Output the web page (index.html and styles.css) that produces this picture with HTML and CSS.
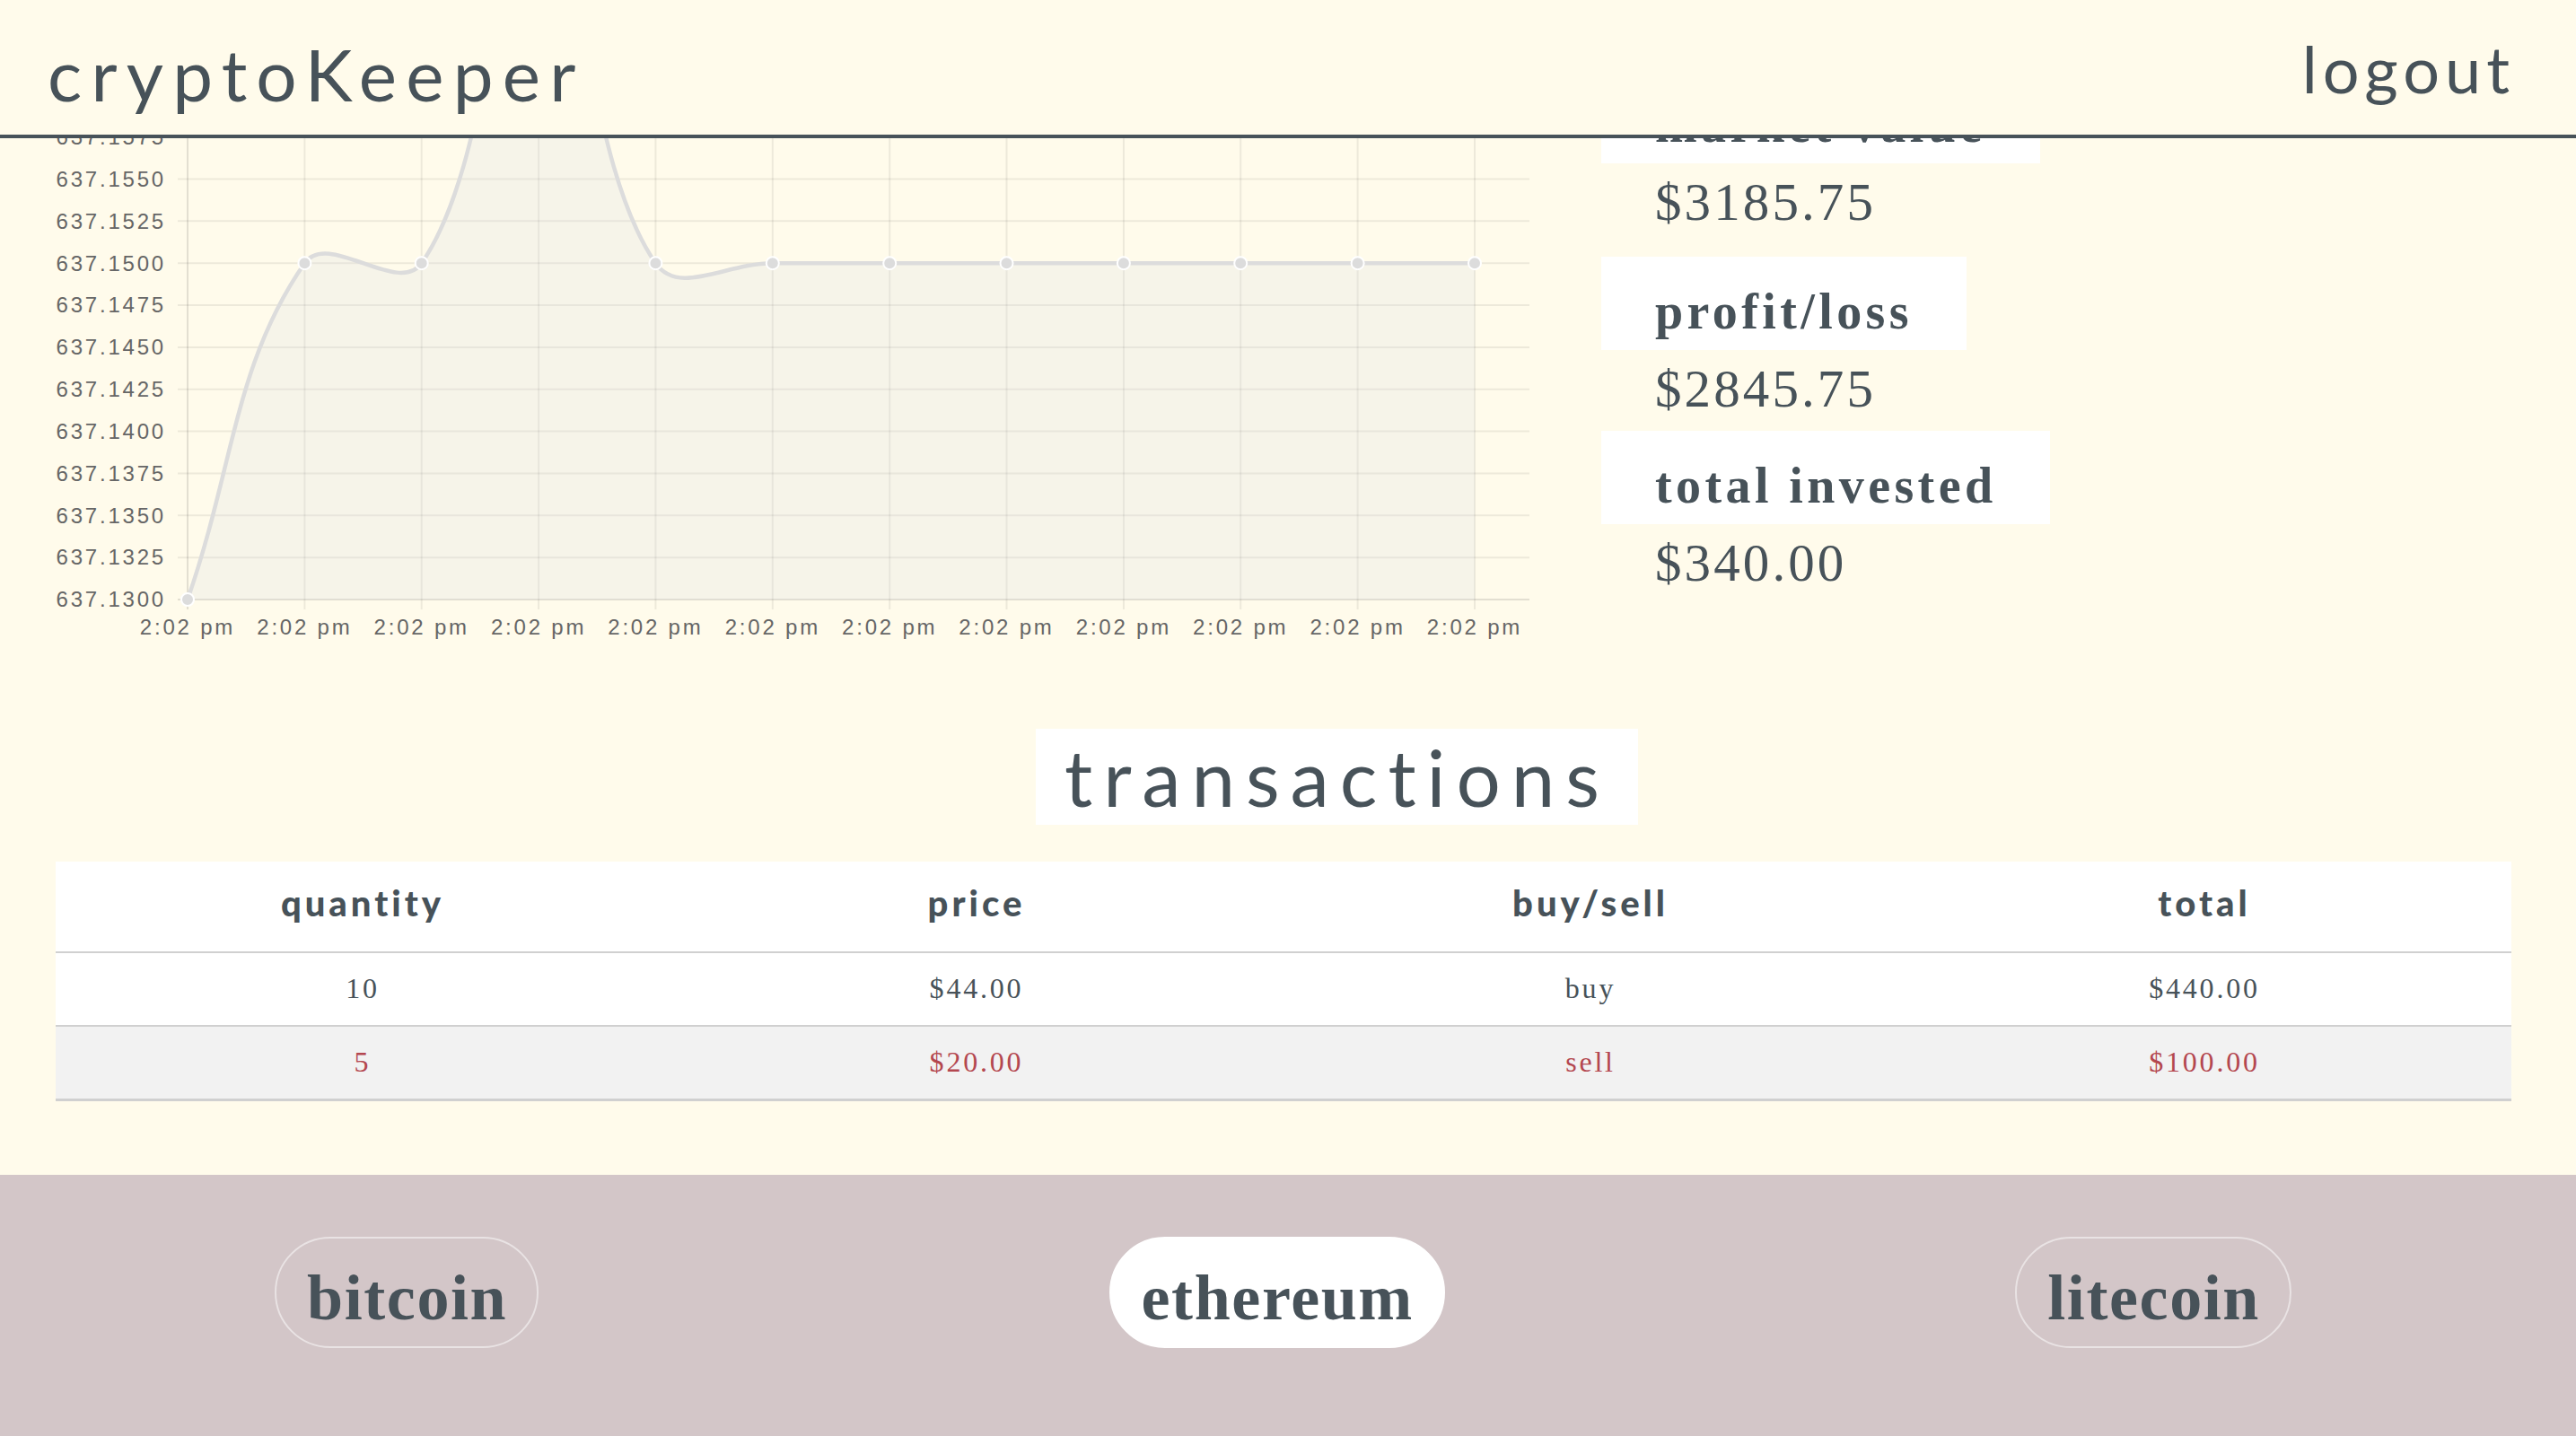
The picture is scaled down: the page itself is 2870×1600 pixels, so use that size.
FILE: index.html
```html
<!DOCTYPE html>
<html lang="en">
<head>
<meta charset="utf-8">
<title>cryptoKeeper</title>
<link rel="stylesheet" href="styles.css">
</head>
<body>
<header class="topbar">
  <div class="brand">cryptoKeeper</div>
  <a class="logout" href="#">logout</a>
</header>

<main class="content">
  <section class="overview">
    <svg class="chart" width="1720" height="720" viewBox="0 0 1720 720">
      <g class="grid">
        <line x1="198" y1="105.8" x2="1704" y2="105.8"/>
        <line x1="198" y1="152.65" x2="1704" y2="152.65"/>
        <line x1="198" y1="199.5" x2="1704" y2="199.5"/>
        <line x1="198" y1="246.35" x2="1704" y2="246.35"/>
        <line x1="198" y1="293.2" x2="1704" y2="293.2"/>
        <line x1="198" y1="340.05" x2="1704" y2="340.05"/>
        <line x1="198" y1="386.9" x2="1704" y2="386.9"/>
        <line x1="198" y1="433.75" x2="1704" y2="433.75"/>
        <line x1="198" y1="480.6" x2="1704" y2="480.6"/>
        <line x1="198" y1="527.45" x2="1704" y2="527.45"/>
        <line x1="198" y1="574.3" x2="1704" y2="574.3"/>
        <line x1="198" y1="621.15" x2="1704" y2="621.15"/>
        <line x1="339.4" y1="0" x2="339.4" y2="679"/>
        <line x1="469.7" y1="0" x2="469.7" y2="679"/>
        <line x1="600.1" y1="0" x2="600.1" y2="679"/>
        <line x1="730.4" y1="0" x2="730.4" y2="679"/>
        <line x1="860.8" y1="0" x2="860.8" y2="679"/>
        <line x1="991.2" y1="0" x2="991.2" y2="679"/>
        <line x1="1121.5" y1="0" x2="1121.5" y2="679"/>
        <line x1="1251.9" y1="0" x2="1251.9" y2="679"/>
        <line x1="1382.2" y1="0" x2="1382.2" y2="679"/>
        <line x1="1512.6" y1="0" x2="1512.6" y2="679"/>
        <line x1="1643" y1="0" x2="1643" y2="679"/>
      </g>
      <g class="axis">
        <line x1="198" y1="668" x2="1704" y2="668"/>
        <line x1="209" y1="0" x2="209" y2="679"/>
      </g>
      <g class="y-labels">
        <text x="185" y="161">637.1575</text>
        <text x="185" y="208">637.1550</text>
        <text x="185" y="255">637.1525</text>
        <text x="185" y="302">637.1500</text>
        <text x="185" y="348">637.1475</text>
        <text x="185" y="395">637.1450</text>
        <text x="185" y="442">637.1425</text>
        <text x="185" y="489">637.1400</text>
        <text x="185" y="536">637.1375</text>
        <text x="185" y="583">637.1350</text>
        <text x="185" y="629">637.1325</text>
        <text x="185" y="676">637.1300</text>
      </g>
      <g class="x-labels">
        <text x="209" y="707">2:02 pm</text>
        <text x="339.4" y="707">2:02 pm</text>
        <text x="469.7" y="707">2:02 pm</text>
        <text x="600.1" y="707">2:02 pm</text>
        <text x="730.4" y="707">2:02 pm</text>
        <text x="860.8" y="707">2:02 pm</text>
        <text x="991.2" y="707">2:02 pm</text>
        <text x="1121.5" y="707">2:02 pm</text>
        <text x="1251.9" y="707">2:02 pm</text>
        <text x="1382.2" y="707">2:02 pm</text>
        <text x="1512.6" y="707">2:02 pm</text>
        <text x="1643" y="707">2:02 pm</text>
      </g>
      <path class="area" d="M209 668 C261.1 518.1 260.9 406 339.4 293.2 C365.1 256.1 443.9 330.3 469.7 293.2 C548.2 180.4 547.9 -81.6 600.1 -81.6 C652.1 -81.6 651.9 180.4 730.4 293.2 C756.2 330.3 808.6 293.2 860.8 293.2 L1643 293.2 L1643 668 Z"/>
      <path class="line" d="M209 668 C261.1 518.1 260.9 406 339.4 293.2 C365.1 256.1 443.9 330.3 469.7 293.2 C548.2 180.4 547.9 -81.6 600.1 -81.6 C652.1 -81.6 651.9 180.4 730.4 293.2 C756.2 330.3 808.6 293.2 860.8 293.2 L1643 293.2"/>
      <g class="points">
        <circle cx="209" cy="668" r="7"/>
        <circle cx="339.4" cy="293.2" r="7"/>
        <circle cx="469.7" cy="293.2" r="7"/>
        <circle cx="730.4" cy="293.2" r="7"/>
        <circle cx="860.8" cy="293.2" r="7"/>
        <circle cx="991.2" cy="293.2" r="7"/>
        <circle cx="1121.5" cy="293.2" r="7"/>
        <circle cx="1251.9" cy="293.2" r="7"/>
        <circle cx="1382.2" cy="293.2" r="7"/>
        <circle cx="1512.6" cy="293.2" r="7"/>
        <circle cx="1643" cy="293.2" r="7"/>
      </g>
    </svg>

    <aside class="stats">
      <h3 class="stat-label">market value</h3>
      <p class="stat-value stat-value--lead">$3185.75</p>
      <h3 class="stat-label">profit/loss</h3>
      <p class="stat-value">$2845.75</p>
      <h3 class="stat-label">total invested</h3>
      <p class="stat-value">$340.00</p>
    </aside>
  </section>

  <section class="transactions">
    <div class="section-head">
      <h2 class="section-title">transactions</h2>
    </div>
    <table class="tx">
      <thead>
        <tr><th>quantity</th><th>price</th><th>buy/sell</th><th>total</th></tr>
      </thead>
      <tbody>
        <tr class="buy"><td>10</td><td>$44.00</td><td>buy</td><td>$440.00</td></tr>
        <tr class="sell"><td>5</td><td>$20.00</td><td>sell</td><td>$100.00</td></tr>
      </tbody>
    </table>
  </section>
</main>

<nav class="coins">
  <button class="coin" type="button">bitcoin</button>
  <button class="coin coin--active" type="button">ethereum</button>
  <button class="coin" type="button">litecoin</button>
</nav>
</body>
</html>
```

FILE: styles.css
```css
* { box-sizing: border-box; }

html, body { margin: 0; padding: 0; }

body {
  background: #fffbeb;
  color: #475259;
  font-family: "Liberation Serif", "Times New Roman", serif;
}

/* fixed top bar lying over the scrolled content */
.topbar {
  position: fixed;
  top: 0;
  left: 0;
  right: 0;
  height: 154px;
  z-index: 10;
  display: flex;
  justify-content: space-between;
  align-items: flex-start;
  padding: 31px 68px 0 53px;
  background: #fffbeb;
  border-bottom: 4px solid #475259;
  font-family: Lato, "Noto Sans", sans-serif;
  font-weight: 400;
}

.brand {
  font-size: 80px;
  line-height: 96px;
  letter-spacing: 10.2px;
  margin-top: 3px;
}

.logout {
  font-size: 72px;
  line-height: 86px;
  letter-spacing: 6px;
  color: #475259;
  text-decoration: none;
  margin-top: 2px;
}

/* chart + stats */
.overview {
  display: flex;
  align-items: flex-start;
}

.chart {
  display: block;
  flex: none;
}

.chart .grid line {
  stroke: rgba(0, 0, 0, 0.07);
  stroke-width: 2;
}

.chart .axis line {
  stroke: rgba(0, 0, 0, 0.11);
  stroke-width: 2;
}

.chart text {
  font-family: "Liberation Sans", Arial, sans-serif;
  font-size: 24px;
  fill: #666;
  letter-spacing: 2.8px;
}

.chart .y-labels text { text-anchor: end; }
.chart .x-labels text { text-anchor: middle; }

.chart .area {
  fill: rgba(215, 218, 228, 0.22);
  stroke: none;
}

.chart .line {
  fill: none;
  stroke: #dcdcdc;
  stroke-width: 4.5;
}

.chart .points circle {
  fill: #dcdcdc;
  stroke: #ffffff;
  stroke-width: 2;
}

.stats {
  margin-left: 64px;
  padding-top: 78px;
  display: flex;
  flex-direction: column;
  align-items: flex-start;
}

.stat-label {
  margin: 0;
  background: #ffffff;
  font-size: 56px;
  line-height: 64px;
  font-weight: 700;
  letter-spacing: 4.4px;
  padding: 29px 60px 11px;
}

.stat-value {
  margin: 9px 0 13px;
  padding-left: 60px;
  font-size: 59px;
  line-height: 68px;
  letter-spacing: 3.1px;
}

.stat-value--lead { margin-bottom: 27px; }

/* transactions */
.section-head {
  display: flex;
  justify-content: center;
  padding-left: 109px;
  margin-top: 92px;
}

.section-title {
  margin: 0;
  background: #ffffff;
  font-family: Lato, "Noto Sans", sans-serif;
  font-weight: 400;
  font-size: 87px;
  line-height: 97px;
  letter-spacing: 12px;
  padding: 5px 31px 5px 32px;
}

.tx {
  margin: 41px 72px 82px 62px;
  width: calc(100% - 134px);
  border-collapse: collapse;
  table-layout: fixed;
  background: #ffffff;
}

.tx th {
  font-family: Lato, "Noto Sans", sans-serif;
  font-weight: 900;
  font-size: 40px;
  line-height: 48px;
  letter-spacing: 4px;
  padding: 22px 0 30px;
  text-align: center;
  border-bottom: 2px solid #d0d0d0;
}

.tx td {
  font-size: 32px;
  line-height: 37px;
  letter-spacing: 2.8px;
  padding: 21px 0 22px;
  text-align: center;
  border-bottom: 2px solid #d0d0d0;
}

.tx .sell td {
  background: #f2f2f2;
  color: #b4474f;
  border-bottom-width: 3px;
}

/* coin switcher */
.coins {
  display: flex;
  justify-content: space-between;
  align-items: flex-start;
  background: #d3c6c8;
  padding: 69px 317px 98px 306px;
}

.coin {
  font-family: "Liberation Serif", "Times New Roman", serif;
  font-weight: 700;
  font-size: 72px;
  line-height: 72px;
  letter-spacing: 1.6px;
  color: #475259;
  background: transparent;
  border: 2px solid rgba(255, 255, 255, 0.5);
  border-radius: 62px;
  padding: 30px 33px 18px 34px;
  margin: 0;
  cursor: pointer;
}

.coin--active {
  background: #ffffff;
  border-color: #ffffff;
}
```
